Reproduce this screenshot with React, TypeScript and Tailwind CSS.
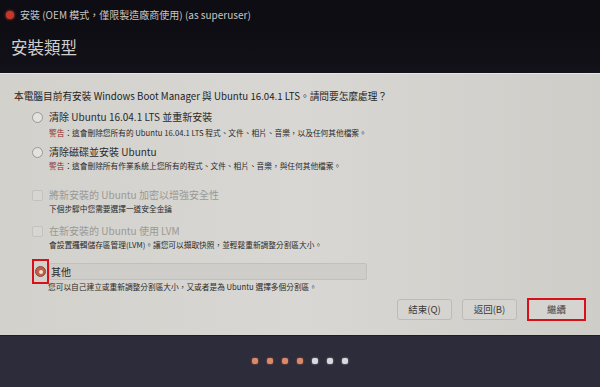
import React from "react";

const cjk = { fontFamily: '"Noto Sans CJK TC", "Noto Sans", sans-serif' };

const Radio = ({ checked }: { checked?: boolean }) => (
  <span
    className={
      "w-[11px] h-[11px] rounded-full border flex items-center justify-center shrink-0 " +
      (checked ? "border-[#8a4a3a] bg-[#c0604a]" : "border-[#9a9894] bg-[#e4e2de]")
    }
  >
    {checked && <span className="w-[4px] h-[4px] rounded-full bg-[#f0e0d8]" />}
  </span>
);

const Check = () => (
  <span className="w-[11px] h-[11px] rounded-[2px] border border-[#c4c2be] bg-[#d8d6d2] shrink-0" />
);

const Warn = ({ text }: { text: string }) => (
  <p className="text-[7.7px] leading-[12px] text-[#2a2a2a] pl-[49px]">
    <span className="text-[#8a2a2a]">警告</span>：{text}
  </p>
);

const App = () => {
  const dots = [true, true, true, true, false, false, false];
  return (
    <div className="w-[600px] h-[387px] flex flex-col bg-[#0e0d13] overflow-hidden" style={cjk}>
      <div className="h-[29px] flex items-center pl-[6px] gap-[6px]">
        <span className="w-[8px] h-[8px] rounded-full bg-[#c8362a] shadow-[0_0_3px_#e05040]" />
        <span className="text-[10px] text-[#c8c6c4]">安裝 (OEM 模式，僅限製造廠商使用) (as superuser)</span>
      </div>
      <div className="h-[44px] flex items-start pl-[11px] pt-[6px] bg-gradient-to-b from-[#0e0d13] to-[#13121a]">
        <span className="text-[16.5px] text-[#d0cecc] leading-[24px]">安裝類型</span>
      </div>
      <div className="flex-1 bg-gradient-to-r from-[#d3d1cc] via-[#d9d7d3] to-[#cfcdc8] border-t border-[#e8e6e2] flex flex-col pt-[14px]">
        <p className="pl-[14px] text-[9.7px] text-[#1e1e1e] leading-[16px]">
          本電腦目前有安裝 Windows Boot Manager 與 Ubuntu 16.04.1 LTS。請問要怎麼處理？
        </p>
        <div className="flex items-center gap-[6px] pl-[32px] mt-[5px]">
          <Radio />
          <span className="text-[10px] text-[#2a2a2a] leading-[16px]">清除 Ubuntu 16.04.1 LTS 並重新安裝</span>
        </div>
        <div className="mt-[2px]">
          <Warn text="這會刪除您所有的 Ubuntu 16.04.1 LTS 程式、文件、相片、音樂，以及任何其他檔案。" />
        </div>
        <div className="flex items-center gap-[6px] pl-[32px] mt-[5px]">
          <Radio />
          <span className="text-[10px] text-[#2a2a2a] leading-[16px]">清除磁碟並安裝 Ubuntu</span>
        </div>
        <div>
          <Warn text="這會刪除所有作業系統上您所有的程式、文件、相片、音樂，與任何其他檔案。" />
        </div>
        <div className="flex items-center gap-[6px] pl-[32px] mt-[15px]">
          <Check />
          <span className="text-[10px] text-[#9a9894] leading-[16px]">將新安裝的 Ubuntu 加密以增強安全性</span>
        </div>
        <p className="pl-[49px] text-[7.7px] leading-[12px] text-[#2a2a2a]">下個步驟中您需要選擇一道安全金鑰</p>
        <div className="flex items-center gap-[6px] pl-[32px] mt-[8px]">
          <Check />
          <span className="text-[10px] text-[#9a9894] leading-[16px]">在新安裝的 Ubuntu 使用 LVM</span>
        </div>
        <p className="pl-[49px] text-[7.7px] leading-[12px] text-[#2a2a2a]">
          會設置邏輯儲存區管理(LVM)。讓您可以擷取快照，並輕鬆重新調整分割區大小。
        </p>
        <div className="flex items-center pl-[32px] mt-[8px]">
          <div className="w-[17px] h-[25px] border-2 border-[#d8101a] flex items-center justify-center shrink-0">
            <Radio checked />
          </div>
          <div className="w-[318px] h-[17px] bg-[#cfcdc9] border border-[#c2c0bc] rounded-[2px] flex items-center pl-[1px]">
            <span className="text-[10px] text-[#2a2a2a] leading-[16px]">其他</span>
          </div>
        </div>
        <p className="pl-[48px] text-[7.7px] leading-[12px] text-[#2a2a2a] -mt-[3px]">
          您可以自己建立或重新調整分割區大小，又或者是為 Ubuntu 選擇多個分割區。
        </p>
        <div className="flex justify-end gap-[10px] pr-[14px] mt-[6px]">
          <button className="w-[55px] h-[21px] rounded-[3px] border border-[#bdbbb7] bg-[#d6d4d0] text-[9.5px] text-[#3a3a3a]">結束(Q)</button>
          <button className="w-[55px] h-[21px] rounded-[3px] border border-[#bdbbb7] bg-[#d6d4d0] text-[9.5px] text-[#3a3a3a]">返回(B)</button>
          <button className="w-[59px] h-[23px] -mt-[1px] border-2 border-[#d8101a] bg-[#d6d4d0] text-[9.5px] text-[#3a3a3a]">繼續</button>
        </div>
      </div>
      <div className="h-[52px] bg-[#2d2c3b] flex items-center justify-center gap-[9px] pb-[2px] border-t border-[#1e1d28]">
        {dots.map((on, i) => (
          <span
            key={i}
            className={
              "w-[6px] h-[6px] rounded-[2px] " +
              (on ? "bg-[#d88a6a] shadow-[0_0_2px_#c06040]" : "bg-[#d8d8de] shadow-[0_0_2px_#a0a0b0]")
            }
          />
        ))}
      </div>
    </div>
  );
};

export default App;
